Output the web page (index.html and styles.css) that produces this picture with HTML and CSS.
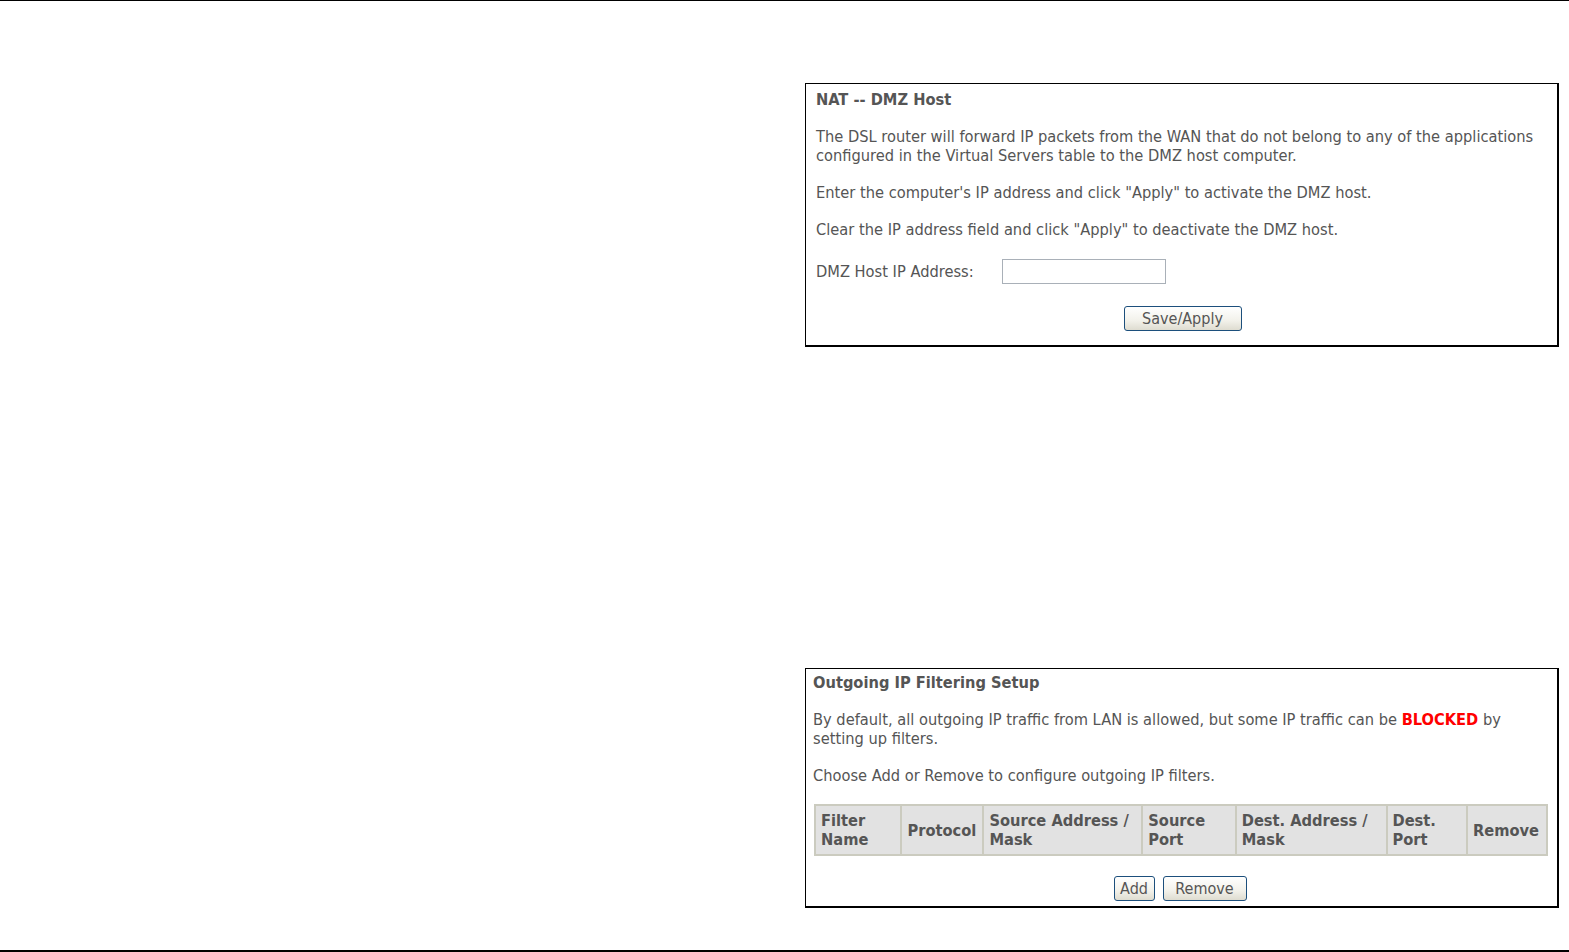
FILE: index.html
```html
<!DOCTYPE html>
<html>
<head>
<meta charset="utf-8">
<link rel="stylesheet" href="styles.css">
</head>
<body>
<div class="page">
  <div class="content">
    <div class="box box-dmz">
      <div class="title">NAT -- DMZ Host</div>
      <p class="para">The DSL router will forward IP packets from the WAN that do not belong to any of the applications<br>configured in the Virtual Servers table to the DMZ host computer.</p>
      <p class="para">Enter the computer's IP address and click "Apply" to activate the DMZ host.</p>
      <p class="para">Clear the IP address field and click "Apply" to deactivate the DMZ host.</p>
      <div class="field-row">
        <span class="label">DMZ Host IP Address:</span>
        <input class="text-input" type="text">
      </div>
      <div class="btn-row">
        <button class="btn btn-save">Save/Apply</button>
      </div>
    </div>

    <div class="box box-filter">
      <div class="title">Outgoing IP Filtering Setup</div>
      <p class="para">By default, all outgoing IP traffic from LAN is allowed, but some IP traffic can be <span class="blocked">BLOCKED</span> by<br>setting up filters.</p>
      <p class="para">Choose Add or Remove to configure outgoing IP filters.</p>
      <table class="filter-table">
        <tr>
          <th class="c1">Filter<br>Name</th>
          <th class="c2">Protocol</th>
          <th class="c3">Source Address /<br>Mask</th>
          <th class="c4">Source<br>Port</th>
          <th class="c5">Dest. Address /<br>Mask</th>
          <th class="c6">Dest.<br>Port</th>
          <th class="c7">Remove</th>
        </tr>
      </table>
      <div class="btn-row btn-row-filter">
        <button class="btn btn-add">Add</button>
        <button class="btn btn-remove">Remove</button>
      </div>
    </div>
  </div>
  <div class="footer"></div>
</div>
</body>
</html>
```

FILE: styles.css
```css
html, body {
  margin: 0;
  padding: 0;
  background: #ffffff;
}

.page {
  height: 952px;
  display: flex;
  flex-direction: column;
  box-sizing: border-box;
  border-top: 1px solid #000;
  font-family: "DejaVu Sans Condensed", "DejaVu Sans", sans-serif;
  font-size: 16.3px;
  color: #555555;
}

.content {
  flex: 1;
  padding-left: 805px;
  padding-top: 82px;
  display: flex;
  flex-direction: column;
}

.box {
  width: 754px;
  box-sizing: border-box;
  border-top: 1px solid #000;
  border-left: 1px solid #000;
  border-right: 2px solid #000;
  border-bottom: 2px solid #000;
  line-height: 19px;
  white-space: nowrap;
}

.box-dmz {
  height: 264px;
  padding: 6px 10px 0 10px;
}

.box-filter {
  margin-top: 321px;
  height: 240px;
  padding: 4px 10px 0 7px;
}

.title {
  font-weight: bold;
  margin-bottom: 18px;
}

.para {
  margin: 0 0 18px 0;
}

.blocked {
  color: #ff0000;
  font-weight: bold;
}

.field-row {
  display: flex;
  align-items: center;
  margin-top: 20px;
  height: 25px;
}

.label {
  width: 186px;
}

.text-input {
  width: 164px;
  height: 25px;
  box-sizing: border-box;
  border: 1px solid #a9b0b8;
  margin: 0;
  padding: 0;
}

.btn-row {
  display: flex;
  justify-content: center;
  gap: 8px;
  margin-top: 22px;
}

.btn-row-filter {
  margin-top: 20px;
}

.btn {
  height: 25px;
  box-sizing: border-box;
  border: 1px solid #1c4f7c;
  border-radius: 3px;
  background: linear-gradient(#ffffff, #f2f1ea 60%, #dedcd0);
  font-family: "DejaVu Sans Condensed", "DejaVu Sans", sans-serif;
  font-size: 16px;
  color: #555;
  padding: 0;
}

.btn-save { width: 118px; margin-left: 2px; }
.btn-add { width: 41px; }
.btn-remove { width: 84px; }

.filter-table {
  margin-top: 19px;
  margin-left: 1px;
  width: 734px;
  border-collapse: collapse;
  border: 1px solid #c9c9bd;
}

.filter-table th {
  background: #e2e2e2;
  border: 2px solid #cbcbbf;
  height: 50px;
  padding: 0 5px;
  text-align: left;
  font-weight: bold;
  line-height: 19px;
  color: #555;
  box-sizing: border-box;
}

.c1 { width: 87px; }
.c2 { width: 82px; }
.c3 { width: 159px; }
.c4 { width: 94px; }
.c5 { width: 151px; }
.c6 { width: 81px; }
.c7 { width: 80px; }

.footer {
  height: 2px;
  background: #000;
}
```
